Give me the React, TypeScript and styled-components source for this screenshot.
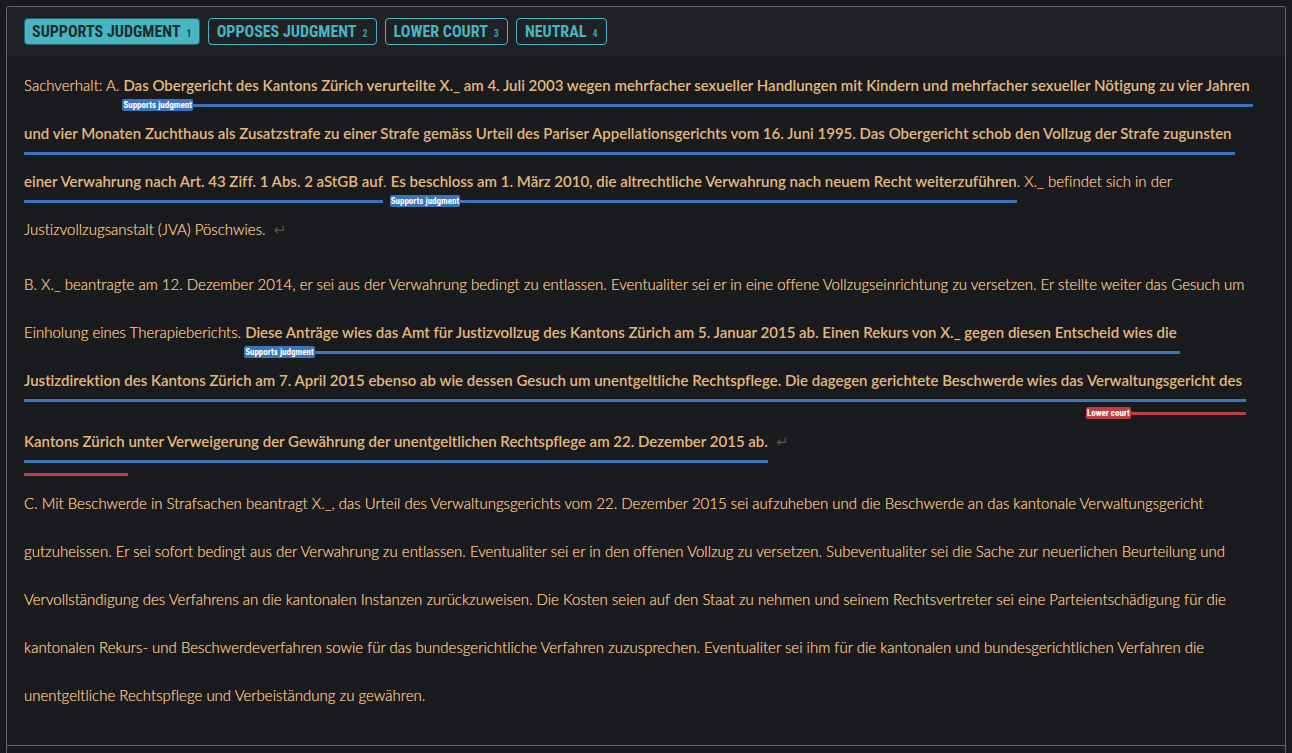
import React, { useState } from "react";
import styled, { createGlobalStyle } from "styled-components";

const colors = {
  page: "#1a1a1e",
  panel: "#1a1b1f",
  header: "#1f2124",
  border: "#686365",
  accent: "#46b6c1",
  text: "#e2b97c",
  blue: "#3b75b8",
  red: "#bc3f45",
};

const GlobalStyle = createGlobalStyle`
  * { box-sizing: border-box; }
  body {
    margin: 0;
    background: ${colors.page};
    color: ${colors.text};
    font-family: Lato, "Open Sans", sans-serif;
  }
`;

const condensed = `"Roboto Condensed", Roboto, sans-serif`;

const Page = styled.main`
  height: 100vh;
  overflow: hidden;
  padding: 6px 6px 0;
`;

const Card = styled.section`
  min-height: 100%;
  background: ${colors.panel};
  border: 1px solid ${colors.border};
  border-bottom: 0;
  border-radius: 3px 3px 0 0;
`;

const Toolbar = styled.header`
  display: flex;
  align-items: flex-start;
  flex-wrap: wrap;
  gap: 8px;
  padding: 11px 17px;
  background: ${colors.header};
  border-radius: 2px 2px 0 0;
`;

const LabelButton = styled.button<{ $active: boolean }>`
  display: flex;
  align-items: baseline;
  gap: 6px;
  height: 27px;
  padding: 0 ${(p) => (p.$active ? 7 : 8)}px;
  border: 1px solid ${(p) => (p.$active ? "#2b6369" : colors.accent)};
  border-radius: 4px;
  background: ${(p) => (p.$active ? colors.accent : "transparent")};
  color: ${(p) => (p.$active ? "#1d2c30" : colors.accent)};
  font: 700 16px/25px ${condensed};
  text-transform: uppercase;
  cursor: pointer;
`;

const KeyHint = styled.small`
  font-size: 10px;
  opacity: 0.8;
`;

const Body = styled.article`
  padding: 5px 17px 26px;
  border-bottom: 1px solid ${colors.border};
  font-size: 15px;
  font-weight: 300;
  line-height: 48px;
  white-space: pre-wrap;
  font-variant-ligatures: none;
  text-shadow: 0 0 0 ${colors.text};
`;

const Paragraph = styled.p`
  margin: 0;

  & + & {
    margin-top: 7px;
  }
`;

const Underlined = styled.span<{ $color: string; $drop: number }>`
  position: relative;
  font-weight: 600;
  text-shadow: none;
  padding-bottom: ${(p) => p.$drop}px;
  background: linear-gradient(${(p) => p.$color}, ${(p) => p.$color}) left bottom / 100% 3px no-repeat;
`;

const Tag = styled.span<{ $color: string; $top: number }>`
  position: absolute;
  left: -1px;
  top: ${(p) => p.$top}px;
  padding: 0 1px;
  border-radius: 2px;
  background: ${(p) => p.$color};
  color: #fff;
  font: 700 9px/12px ${condensed};
  white-space: nowrap;
`;

/* Reserves room below the text line for a second row of underlines. */
const Room = styled.span<{ $height: number }>`
  display: inline-block;
  width: 0;
  height: ${(p) => p.$height}px;
  vertical-align: top;
`;

const Return = styled.span`
  opacity: 0.35;
  text-shadow: none;
  font: 15px/12px "DejaVu Sans", sans-serif;
`;

const labels = ["Supports judgment", "Opposes judgment", "Lower court", "Neutral"];

function Support({ children }: { children: React.ReactNode }) {
  return (
    <Underlined $color={colors.blue} $drop={13}>
      {children}
      <Tag $color={colors.blue} $top={23}>Supports judgment</Tag>
    </Underlined>
  );
}

export default function App() {
  const [active, setActive] = useState(0);
  return (
    <>
      <GlobalStyle />
      <Page>
        <Card>
          <Toolbar>
            {labels.map((label, i) => (
              <LabelButton key={label} type="button" $active={i === active} aria-pressed={i === active} onClick={() => setActive(i)}>
                {label}
                <KeyHint>{i + 1}</KeyHint>
              </LabelButton>
            ))}
          </Toolbar>
          <Body lang="de">
            <Paragraph>
              {"Sachverhalt: A. "}
              <Support>
                Das Obergericht des Kantons Zürich verurteilte X._ am 4. Juli 2003 wegen mehrfacher sexueller Handlungen mit Kindern und mehrfacher sexueller Nötigung zu vier Jahren und vier Monaten Zuchthaus als Zusatzstrafe zu einer Strafe gemäss Urteil des Pariser Appellationsgerichts vom 16. Juni 1995. Das Obergericht schob den Vollzug der Strafe zugunsten einer Verwahrung nach Art. 43 Ziff. 1 Abs. 2 aStGB auf
              </Support>
              {". "}
              <Support>
                Es beschloss am 1. März 2010, die altrechtliche Verwahrung nach neuem Recht weiterzuführen
              </Support>
              {". X._ befindet sich in der Justizvollzugsanstalt (JVA) Pöschwies.  "}
              <Return>↵</Return>
            </Paragraph>
            <Paragraph>
              {"B. X._ beantragte am 12. Dezember 2014, er sei aus der Verwahrung bedingt zu entlassen. Eventualiter sei er in eine offene Vollzugseinrichtung zu versetzen. Er stellte weiter das Gesuch um Einholung eines Therapieberichts. "}
              <Support>
                {"Diese Anträge wies das Amt für Justizvollzug des Kantons Zürich am 5. Januar 2015 ab. Einen Rekurs von X._ gegen diesen Entscheid wies die Justizdirektion des Kantons Zürich am 7. April 2015 ebenso ab wie dessen Gesuch um unentgeltliche Rechtspflege. Die dagegen gerichtete Beschwerde wies das "}
                <Underlined $color={colors.red} $drop={26}>
                  <Room $height={61} />
                  {"Verwaltungsgericht des Kantons Zürich "}
                  <Room $height={55} />
                  <Tag $color={colors.red} $top={36}>Lower court</Tag>
                </Underlined>
                unter Verweigerung der Gewährung der unentgeltlichen Rechtspflege am 22. Dezember 2015 ab.
              </Support>
              {"  "}
              <Return>↵</Return>
            </Paragraph>
            <Paragraph>
              C. Mit Beschwerde in Strafsachen beantragt X._, das Urteil des Verwaltungsgerichts vom 22. Dezember 2015 sei aufzuheben und die Beschwerde an das kantonale Verwaltungsgericht gutzuheissen. Er sei sofort bedingt aus der Verwahrung zu entlassen. Eventualiter sei er in den offenen Vollzug zu versetzen. Subeventualiter sei die Sache zur neuerlichen Beurteilung und Vervollständigung des Verfahrens an die kantonalen Instanzen zurückzuweisen. Die Kosten seien auf den Staat zu nehmen und seinem Rechtsvertreter sei eine Parteientschädigung für die kantonalen Rekurs- und Beschwerdeverfahren sowie für das bundesgerichtliche Verfahren zuzusprechen. Eventualiter sei ihm für die kantonalen und bundesgerichtlichen Verfahren die unentgeltliche Rechtspflege und Verbeiständung zu gewähren.
            </Paragraph>
          </Body>
        </Card>
      </Page>
    </>
  );
}
